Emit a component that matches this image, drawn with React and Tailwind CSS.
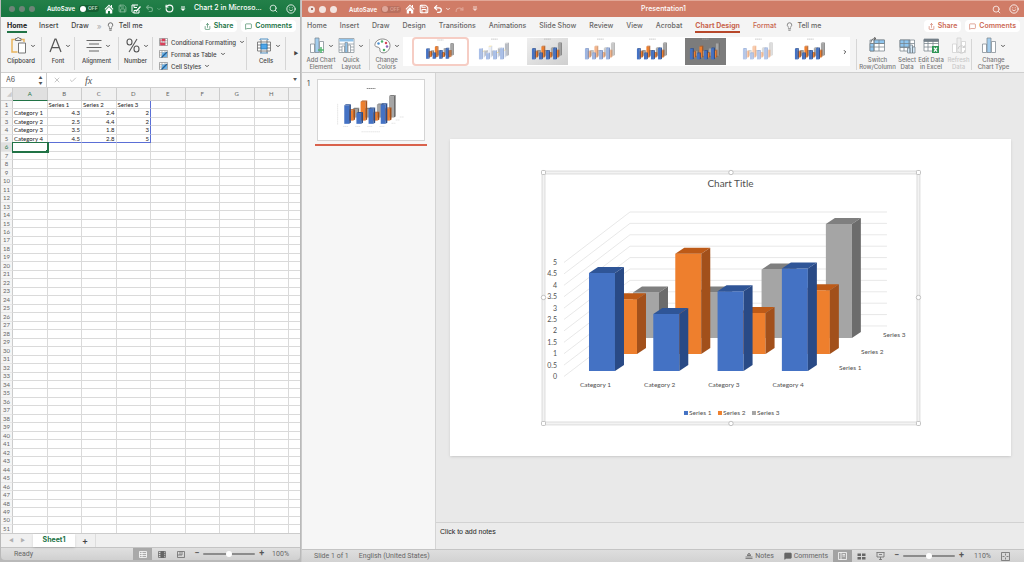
import {
  Check,
  ChevronDown,
  ChevronRight,
  Lightbulb,
  MessageSquare,
  Redo,
  RotateCcw,
  Save,
  Search,
  Share,
  Smile,
  Undo2,
  X,
} from 'lucide-react';

const CATEGORIES = ['Category 1', 'Category 2', 'Category 3', 'Category 4'];
const SERIES = [
  [4.3, 2.5, 3.5, 4.5],
  [2.4, 4.4, 1.8, 2.8],
  [2, 2, 3, 5],
];
const COLUMNS = ['A', 'B', 'C', 'D', 'E', 'F', 'G', 'H'];
const SHEET = [
  ['', 'Series 1', 'Series 2', 'Series 3'],
  ['Category 1', '4.3', '2.4', '2'],
  ['Category 2', '2.5', '4.4', '2'],
  ['Category 3', '3.5', '1.8', '3'],
  ['Category 4', '4.5', '2.8', '5'],
];
const ROWS = Array.from({ length: 51 }, (_, i) => i + 1);

const UI = "font-['Inter','Liberation_Sans',sans-serif]";

/* ---------- 3D chart ---------- */

const BASE = [
  { x: 589, y: 371 },
  { x: 611, y: 354 },
  { x: 633, y: 338 },
];
const OFFICE = [
  ['#4472c4', '#2f5597', '#294a86'],
  ['#ee7f2d', '#bd5a17', '#a2501b'],
  ['#a5a5a5', '#7f7f7f', '#6c6c6c'],
];

const Bar = ({ x, y, h, colors }) => (
  <g>
    <path d={`M${x} ${y - h}h26v${h}h-26z`} fill={colors[0]} />
    <path d={`M${x} ${y - h}l9 -6h26l-9 6z`} fill={colors[1]} />
    <path d={`M${x + 26} ${y - h}l9 -6v${h}l-9 6z`} fill={colors[2]} />
  </g>
);

const Bars = ({ palette = OFFICE }) =>
  [2, 1, 0].map((s) => (
    <g key={s}>
      {SERIES[s].map((v, c) => (
        <Bar key={c} x={BASE[s].x + c * 64.3} y={BASE[s].y} h={v * 22.8} colors={palette[s]} />
      ))}
    </g>
  ));

const GridLines = () => (
  <g fill="none" stroke="#e2e2e2" strokeWidth="0.8">
    {Array.from({ length: 11 }, (_, i) => (
      <path key={i} d={`M564 ${376.5 - i * 11.4}L630 ${326 - i * 11.4}H887`} />
    ))}
  </g>
);

const SlideChart = () => (
  <svg
    viewBox="450 139 561 317"
    className="block w-full bg-white shadow-sm font-['Lato','Liberation_Sans',sans-serif]"
    role="img"
    aria-label="Chart Title"
  >
    <rect x="543.5" y="172.5" width="375" height="251" fill="none" stroke="#f3f3f3" strokeWidth="3" />
    <rect x="542" y="171" width="378" height="254" fill="none" stroke="#cacaca" strokeWidth="0.6" />
    <rect x="545" y="174" width="372" height="248" fill="none" stroke="#cacaca" strokeWidth="0.6" />
    <GridLines />
    <Bars />
    <g fill="#505050" fontSize="7">
      <text x="730.5" y="187" fontSize="10" textAnchor="middle">Chart Title</text>
      {Array.from({ length: 11 }, (_, i) => (
        <text key={i} x="557" y={379 - i * 11.4} textAnchor="end">{i / 2}</text>
      ))}
      {CATEGORIES.map((c, i) => (
        <text key={c} x={595.5 + i * 64.2} y="387.5" fontSize="6.5" textAnchor="middle">{c}</text>
      ))}
      {[0, 1, 2].map((s) => (
        <g key={s} fontSize="6.5">
          <text x={839 + s * 22} y={370.5 - s * 16.5}>{`Series ${s + 1}`}</text>
          <rect x={684 + s * 34} y="411" width="4" height="4" fill={OFFICE[s][0]} />
          <text x={689 + s * 34} y="415.5">{`Series ${s + 1}`}</text>
        </g>
      ))}
    </g>
    <g fill="#fff" stroke="#b4b4b4" strokeWidth="0.8">
      {[543.5, 918.5].map((x) =>
        [172.5, 423.5].map((y) => <rect key={`${x}-${y}`} x={x - 2} y={y - 2} width="4" height="4" rx="1" />)
      )}
      <circle cx="731" cy="172.5" r="2.2" />
      <circle cx="731" cy="423.5" r="2.2" />
      <circle cx="543.5" cy="297.5" r="2.2" />
      <circle cx="918.5" cy="297.5" r="2.2" />
    </g>
  </svg>
);

const SlideThumb = () => (
  <svg viewBox="450 139 561 317" className="block w-full border border-[#d4d4d4] bg-white" aria-hidden="true">
    <Bars />
    <g stroke="#8a8a8a" strokeWidth="4" strokeDasharray="8 2">
      <path d="M708 184h46" stroke="#666" />
      <g strokeWidth="2" stroke="#bbb">
        <path d="M583 385h26M647 385h26M711 385h26M775 385h26M680 413h100M839 368h22M861 351h22M883 335h22" />
        <path d="M554 265v112" />
      </g>
    </g>
  </svg>
);

/* ---------- small shared bits ---------- */

const Divider = () => <div className="my-[2px] w-px shrink-0 self-stretch bg-[#d6d6d6]" />;

const Caret = () => <ChevronDown size={6} strokeWidth={4} className="shrink-0 text-[#555]" />;

const HomeIcon = () => (
  <svg width="10" height="10" viewBox="0 0 20 20" fill="currentColor">
    <path d="M10 1L1 10l1.500 1.500L10 4l7.500 7.500L19 10l-3-3V2h-2v3z" />
    <path d="M10 6l-6.500 6.500V19h4.500v-5h4v5h4.500v-6.500z" />
  </svg>
);

const SaveEditIcon = () => (
  <svg width="10" height="10" viewBox="0 0 20 20" fill="none" stroke="currentColor" strokeWidth="2">
    <path d="M14 2H2v13l3 3h11v-6M6 2v5h6M6 18v-5h4" />
    <path d="M9 12l2 2 8-9" strokeWidth="2.500" />
  </svg>
);

const MoreIcon = () => (
  <svg width="6" height="6" viewBox="0 0 12 12" fill="currentColor">
    <path d="M2 1h8v2H2zM1 5h10l-5 5z" />
  </svg>
);

const IconButton = ({ label, className = '', children }) => (
  <button type="button" aria-label={label} className={`flex shrink-0 items-center ${className}`}>
    {children}
  </button>
);

const AutoSave = ({ dim }) => (
  <label className="flex shrink-0 items-center gap-1 text-[6px] font-semibold">
    AutoSave
    <span className={`flex h-[7px] w-5 items-center gap-[2px] rounded-full px-px ${dim ? 'bg-[#b9705f]' : 'bg-[#155f33]'}`}>
      <input
        type="checkbox"
        className={`size-[6px] shrink-0 appearance-none rounded-full ${dim ? 'bg-[#dfa699]' : 'bg-white'}`}
      />
      <span className={`text-[5px] leading-[7px] ${dim ? 'text-[#dba092]' : 'text-[#c5dccd]'}`}>OFF</span>
    </span>
  </label>
);

const ShareButtons = ({ color }) => (
  <div className={`flex shrink-0 items-center gap-1 text-[7px] font-semibold ${color}`}>
    <button type="button" className="flex h-3 items-center gap-[3px] rounded-sm bg-white px-1">
      <Share size={7} /> Share
    </button>
    <button type="button" className="flex h-3 items-center gap-[3px] rounded-sm bg-white px-1">
      <MessageSquare size={7} /> Comments
    </button>
  </div>
);

const ZoomControl = ({ label }) => (
  <div className="flex items-center gap-1 text-[9px] font-semibold text-[#555]">
    <button type="button" aria-label="Zoom out">−</button>
    <input
      type="range"
      aria-label={label}
      defaultValue="50"
      className="h-[2px] w-[52px] appearance-none rounded-full bg-[#8c8c8c] [&::-webkit-slider-thumb]:size-[6px] [&::-webkit-slider-thumb]:appearance-none [&::-webkit-slider-thumb]:rounded-full [&::-webkit-slider-thumb]:bg-white"
    />
    <button type="button" aria-label="Zoom in">+</button>
  </div>
);

/* ---------- ribbon icons ---------- */

const ClipboardIcon = () => (
  <svg width="16" height="17" viewBox="0 0 32 34" fill="none" strokeWidth="2">
    <path d="M9 5H2v25h11M20 5h6v5" stroke="#e8b45c" strokeWidth="3" />
    <path d="M9 7V3h3c0-3 5-3 5 0h3v4z" fill="#eee" stroke="#777" />
    <path d="M15 12h14v20H15z" fill="#fff" stroke="#777" />
  </svg>
);

const FontIcon = () => (
  <svg width="13" height="15" viewBox="0 0 26 30" fill="none" stroke="#555" strokeWidth="2.500">
    <path d="M2 28L12 2h2l10 26M6 19h14" />
  </svg>
);

const AlignIcon = () => (
  <svg width="16" height="13" viewBox="0 0 32 26" fill="none" stroke="#666" strokeWidth="2">
    <path d="M1 3h30M6 10h20M1 17h30M6 24h20" />
  </svg>
);

const PercentIcon = () => (
  <svg width="14" height="15" viewBox="0 0 28 30" fill="none" stroke="#555" strokeWidth="2.200">
    <ellipse cx="7" cy="8" rx="5" ry="6" />
    <ellipse cx="21" cy="22" rx="5" ry="6" />
    <path d="M22 2L6 28" />
  </svg>
);

const StyleIcon = ({ kind }) => (
  <svg width="9" height="8" viewBox="0 0 18 16" fill="none" strokeWidth="1.200">
    <path d="M1 1h16v14H1z" fill="#fff" stroke="#777" />
    <path d="M1 5.500h16M1 10h16M6 1v14M12 1v14" stroke="#888" />
    {kind === 'cond' ? (
      <path d="M6 2h6v4H6zM3 10h9v4H3zM3 2v11" fill="#d9415a" stroke="#d9415a" />
    ) : (
      <>
        <path d="M6 5h10v9H6z" fill="#6fb2e6" />
        <path d="M16 4l-8 8-3 3" stroke="#235f94" strokeWidth="2.500" />
      </>
    )}
  </svg>
);

const CellsIcon = () => (
  <svg width="16" height="16" viewBox="0 0 32 32" fill="none" stroke="#666" strokeWidth="1.600">
    <path d="M3 8h26v18H3z" fill="#fff" />
    <path d="M3 14h26M3 20h26M10 4v26M22 4v26" />
    <path d="M10 12h12v10H10z" fill="#4ea6ea" stroke="#2878b8" />
    <path d="M8 2h16M8 2v2M24 2v2M8 30h16" stroke="#2878b8" />
  </svg>
);

const ColumnsIcon = ({ plus, faded }) => (
  <svg width="16" height="17" viewBox="0 0 32 34" stroke={faded ? '#cfcfcf' : '#7d8891'} strokeWidth="1.500" fill="#fff">
    <path d="M3 14h8v17H3z" />
    <path d="M12 2h8v29h-8z" fill={faded ? '#eee' : '#a3cdee'} />
    <path d="M21 9h8v22h-8z" />
    {plus && <path d="M24 20v12M18 26h12" stroke="#54b872" strokeWidth="3" />}
    {faded && <path d="M14 24a7 7 0 0 1 13-3v-4m0 4h-4M28 26a7 7 0 0 1-13 3" fill="none" strokeWidth="2" />}
  </svg>
);

const LayoutIcon = () => (
  <svg width="17" height="17" viewBox="0 0 34 34" fill="#fff" stroke="#8a949c" strokeWidth="1.500">
    <path d="M2 3h30v28H2z" />
    <path d="M3 4h28v5H3z" fill="#8fc2ea" stroke="none" />
    <path d="M2 14h30M2 20h30M2 26h30" />
    <path d="M8 18h5v13H8z" />
    <path d="M14 11h5v20h-5z" fill="#8fc2ea" />
    <path d="M20 16h5v15h-5z" />
  </svg>
);

const PaletteIcon = () => (
  <svg width="17" height="16" viewBox="0 0 34 32" fill="#fff" stroke="#666" strokeWidth="1.500">
    <path d="M17 2C7 2 1 9 2 15c1 4 6 2 9 5 2 3-1 7 4 9 8 3 17-4 17-14C32 7 25 2 17 2z" />
    <g stroke="none">
      <circle cx="9" cy="11" r="2.500" fill="#4a8fd0" />
      <circle cx="16" cy="7" r="2.500" fill="#4cae6a" />
      <circle cx="24" cy="10" r="2.500" fill="#d8485a" />
      <circle cx="26" cy="17" r="2.500" fill="#8a63b5" />
      <circle cx="20" cy="24" r="2.500" fill="#4cae6a" />
    </g>
  </svg>
);

const TableIcon = ({ kind }) => (
  <svg width="17" height="17" viewBox="0 0 34 34" fill="#fff" stroke="#75818a" strokeWidth="1.500">
    <path d="M2 6h29v22H2z" />
    {kind === 'switch' && <path d="M10 6h21v7H10zM2 13h8v15H2z" fill="#8fc6f0" />}
    {kind === 'select' && <path d="M2 6h20v15H2z" fill="#8fc6f0" />}
    {kind === 'excel' && <path d="M2 4h29v5H2z" fill="#75818a" />}
    <path d="M2 13h29M2 20h29M10 6v22M20 6v22" fill="none" />
    {kind === 'switch' && <path d="M4 11C4 5 8 3 13 3M10 0l4 3-4 3" fill="none" stroke="#444" />}
    {kind === 'select' && <path d="M17 22h5v10h-5zM22 16h5v16h-5zM27 20h5v12h-5z" fill="#d3e8f8" />}
    {kind === 'excel' && (
      <>
        <path d="M18 18h14v14H18z" fill="#2e9455" stroke="none" />
        <path d="M22 21l6 8M28 21l-6 8" stroke="#fff" strokeWidth="2.500" />
      </>
    )}
  </svg>
);

/* ---------- Excel window ---------- */

const RibbonGroup = ({ label, icon, className }) => (
  <button type="button" className={`flex flex-col items-center gap-[3px] pt-[2px] ${className}`}>
    <span className="flex h-[17px] items-center gap-[3px] pl-1">
      {icon}
      <Caret />
    </span>
    <span className="leading-[7px] whitespace-nowrap">{label}</span>
  </button>
);

const ExcelTitleBar = () => (
  <header className="flex h-[17px] shrink-0 items-center bg-linear-to-b from-[#238049] to-[#17753f] pr-1 pl-2 text-white">
    <div className="flex gap-1">
      <span className="size-[6px] rounded-full bg-[#6d8577]" />
      <span className="size-[6px] rounded-full bg-[#6d8577]" />
      <span className="size-[6px] rounded-full bg-[#6d8577]" />
    </div>
    <div className="ml-3"><AutoSave /></div>
    <IconButton label="Home" className="ml-[5px]"><HomeIcon /></IconButton>
    <IconButton label="Save" className="ml-1 text-[#7fb594]"><Save size={9} strokeWidth={2.5} /></IconButton>
    <IconButton label="Save as" className="ml-1"><SaveEditIcon /></IconButton>
    <IconButton label="Undo" className="ml-1 gap-[2px] text-[#6dab86]"><Undo2 size={9} strokeWidth={3} /><ChevronDown size={6} strokeWidth={3} /></IconButton>
    <IconButton label="Redo" className="ml-[3px]"><RotateCcw size={9} strokeWidth={3} /></IconButton>
    <IconButton label="More" className="ml-[6px]"><MoreIcon /></IconButton>
    <h1 className="ml-2 min-w-0 flex-1 text-[7px] font-medium whitespace-nowrap">Chart 2 in Microso...</h1>
    <IconButton label="Search"><Search size={9} /></IconButton>
    <IconButton label="Feedback" className="ml-2"><Smile size={10} /></IconButton>
  </header>
);

const ExcelRibbon = () => (
  <div className="shrink-0 border-b border-[#d0d0d0] bg-[#f4f4f4]">
    <nav className="flex h-[18px] items-center pr-1 pl-[6px] text-[7px] font-medium text-[#444]">
      <a href="#home" className="border-b-2 border-[#217346] pt-px leading-[10px] font-bold text-[#222]">Home</a>
      <a href="#insert" className="ml-3">Insert</a>
      <a href="#draw" className="ml-[13px]">Draw</a>
      <span className="ml-2 text-[8px] text-[#b5b5b5]">»</span>
      <button type="button" className="ml-1 flex items-center gap-1"><Lightbulb size={9} /> Tell me</button>
      <div className="ml-auto"><ShareButtons color="text-[#217346]" /></div>
    </nav>
    <div className="flex h-[37px] text-[6px] font-medium text-[#444]">
      <RibbonGroup label="Clipboard" icon={<ClipboardIcon />} className="w-10" />
      <Divider />
      <RibbonGroup label="Font" icon={<FontIcon />} className="w-[32px]" />
      <Divider />
      <RibbonGroup label="Alignment" icon={<AlignIcon />} className="w-[43px]" />
      <Divider />
      <RibbonGroup label="Number" icon={<PercentIcon />} className="w-[33px]" />
      <Divider />
      <div className="flex flex-1 flex-col justify-around pt-px pl-[6px]">
        <button type="button" className="flex items-center gap-[3px] whitespace-nowrap"><StyleIcon kind="cond" />Conditional Formatting <Caret /></button>
        <button type="button" className="flex items-center gap-[3px] whitespace-nowrap"><StyleIcon />Format as Table <Caret /></button>
        <button type="button" className="flex items-center gap-[3px] whitespace-nowrap"><StyleIcon />Cell Styles <Caret /></button>
      </div>
      <Divider />
      <RibbonGroup label="Cells" icon={<CellsIcon />} className="w-[38px]" />
      <Divider />
      <button type="button" aria-label="Scroll ribbon" className="ml-[6px] w-2 text-[5px]">▶</button>
    </div>
  </div>
);

const FormulaBar = () => (
  <div className="flex h-[15px] shrink-0 items-center border-b border-[#d0d0d0] bg-white text-[#555]">
    <input aria-label="Name box" defaultValue="A6" className="w-[34px] pl-[5px] text-[7px]" />
    <div className="flex h-full w-3 flex-col items-center justify-center gap-px border-r border-[#ccc] text-[4px] leading-[5px]">
      <span>▲</span>
      <span>▼</span>
    </div>
    <IconButton label="Cancel" className="ml-[6px] text-[#bcbcbc]"><X size={8} strokeWidth={2.5} /></IconButton>
    <IconButton label="Enter" className="ml-2 text-[#bcbcbc]"><Check size={8} strokeWidth={2.5} /></IconButton>
    <label htmlFor="formula" className="ml-2 font-['Liberation_Serif',serif] text-[10px] italic">fx</label>
    <input id="formula" className="min-w-0 flex-1 px-1 text-[7px]" />
    <span className="pr-[3px] text-[4px]">▼</span>
  </div>
);

// borders of the charted range and of the selected cell
const cellClass = (row, col) => {
  if (row === 6 && col === 0) return 'relative outline outline-[#217346] border-[#217346]';
  let cls = row === 5 && col > 0 && col < 4 ? 'border-b-[#5b6fd6]' : 'border-b-[#dadada]';
  cls += col === 3 && row < 6 ? ' border-r-[#5b6fd6]' : ' border-r-[#dadada]';
  if (row > 1 && col > 0) cls += ' text-right';
  return cls;
};

const Sheet = () => (
  <div className="min-h-0 flex-1 overflow-hidden bg-white">
    <table className="h-[446px] w-full table-fixed border-separate border-spacing-0 font-['Lato','Liberation_Sans',sans-serif] text-[6px] leading-[6px] text-[#222]">
      <colgroup>
        <col className="w-[12px]" />
        {COLUMNS.map((c) => <col key={c} />)}
        <col className="w-[11px]" />
      </colgroup>
      <thead>
        <tr className="h-[13px] bg-[#f1f1f1] text-[#666]">
          <th className="border-r border-b border-[#ccc] p-0 text-right text-[#ccc]">◢</th>
          {COLUMNS.map((c) => (
            <th
              key={c}
              scope="col"
              className={`border-r border-b p-0 font-normal ${c === 'A' ? 'border-r-[#ccc] border-b-[#217346] bg-[#e0e0e0] text-[#217346]' : 'border-[#ccc]'}`}
            >
              {c}
            </th>
          ))}
          <th className="border-b border-[#ccc] p-0" />
        </tr>
      </thead>
      <tbody>
        {ROWS.map((r) => (
          <tr key={r}>
            <th
              scope="row"
              className={`border-r border-b border-r-[#ccc] border-b-[#e6e6e6] p-0 font-normal ${r === 6 ? 'bg-[#e0e0e0] text-[#217346]' : 'bg-[#f5f5f5] text-[#666]'}`}
            >
              {r}
            </th>
            {COLUMNS.map((c, i) => (
              <td key={c} className={`border-r border-b p-0 px-px whitespace-nowrap ${cellClass(r, i)}`}>
                {SHEET[r - 1]?.[i]}
                {r === 6 && i === 0 && <span className="absolute -right-[2px] -bottom-[2px] size-[3px] bg-[#217346]" />}
              </td>
            ))}
            <td className="border-b border-[#dadada] p-0" />
          </tr>
        ))}
      </tbody>
    </table>
  </div>
);

const GridIcon = ({ heavy }) => (
  <svg width="8" height="7" viewBox="0 0 16 14" fill="none" stroke="currentColor" strokeWidth="1.500">
    <path d="M1 1h14v12H1zM1 5h14M1 9h14M6 1v12" />
    {heavy && <path d="M6 1h6v12H6z" fill="currentColor" />}
  </svg>
);

const ExcelFooter = () => (
  <footer className="shrink-0 text-[7px] text-[#666]">
    <div className="flex h-[14px] items-stretch border-t border-[#ccc] bg-[#f0f0f0]">
      <div className="flex w-[32px] items-center gap-[7px] pl-2 text-[5px] text-[#b0b0b0]">
        <span>◀</span>
        <span>▶</span>
      </div>
      <a href="#sheet1" className="flex w-[42px] items-center justify-center bg-white font-bold text-[#217346] shadow-sm">Sheet1</a>
      <button type="button" aria-label="Add sheet" className="w-[21px] border-r border-[#ddd] text-[9px] leading-3 font-semibold text-[#444]">+</button>
    </div>
    <div className="flex h-[13px] items-center rounded-b border-t border-[#c4c4c4] bg-linear-to-b from-[#e0e0e0] to-[#d0d0d0] pr-[11px] pl-[13px] font-['Roboto','Liberation_Sans',sans-serif]">
      <span className="flex-1">Ready</span>
      <IconButton label="Normal view" className="h-full w-[19px] justify-center bg-[#a9a9a9] text-white"><GridIcon /></IconButton>
      <IconButton label="Page layout" className="w-[19px] justify-center"><GridIcon heavy /></IconButton>
      <IconButton label="Page break" className="mr-1 w-[19px] justify-center">
        <svg width="8" height="7" viewBox="0 0 16 14" fill="none" stroke="currentColor" strokeWidth="1.500">
          <path d="M1 1h14v12H1zM6 1v7M10 1v7M1 8h9" />
        </svg>
      </IconButton>
      <ZoomControl label="Sheet zoom" />
      <span className="ml-2">100%</span>
    </div>
  </footer>
);

const ExcelWindow = () => (
  <section className="flex w-[29.4%] shrink-0 flex-col overflow-hidden border-x border-[#b9b9b9] pb-[2px]">
    <ExcelTitleBar />
    <ExcelRibbon />
    <FormulaBar />
    <Sheet />
    <ExcelFooter />
  </section>
);

/* ---------- PowerPoint window ---------- */

const PptButton = ({ lines, icon, caret, className = '' }) => (
  <button type="button" className={`flex shrink-0 flex-col items-center gap-[2px] ${className}`}>
    <span className="flex h-[17px] items-center gap-[3px]">
      {icon}
      {caret && <Caret />}
    </span>
    <span className="text-center leading-[7px] whitespace-nowrap">
      {lines[0]}
      <br />
      {lines[1]}
    </span>
  </button>
);

const PptTitleBar = () => (
  <header className="flex h-[17px] shrink-0 items-center border-t border-[#e2a797] bg-[#d07c67] pr-[5px] pl-[6px] text-white">
    <div className="flex flex-1 items-center">
      <div className="flex gap-1">
        <span className="flex size-[7px] items-center justify-center rounded-full bg-[#f3e4e0]"><span className="size-[2px] rounded-full bg-[#8d4a3b]" /></span>
        <span className="size-[7px] rounded-full bg-[#f3e4e0]" />
        <span className="size-[7px] rounded-full bg-[#f3e4e0]" />
      </div>
      <div className="ml-3"><AutoSave dim /></div>
      <IconButton label="Home" className="ml-1"><HomeIcon /></IconButton>
      <IconButton label="Save" className="ml-1"><Save size={10} strokeWidth={2.5} /></IconButton>
      <IconButton label="Undo" className="ml-1 gap-[2px]"><Undo2 size={10} strokeWidth={3} /><ChevronDown size={6} strokeWidth={3} /></IconButton>
      <IconButton label="Redo" className="ml-1 text-[#e0a597]"><Redo size={9} strokeWidth={3} /></IconButton>
      <IconButton label="More" className="ml-2 text-[#f0d4cd]"><MoreIcon /></IconButton>
    </div>
    <h1 className="text-[7px] font-medium">Presentation1</h1>
    <div className="flex flex-1 justify-end gap-2">
      <IconButton label="Search"><Search size={9} /></IconButton>
      <IconButton label="Feedback"><Smile size={10} /></IconButton>
    </div>
  </header>
);

const TABS = ['Home', 'Insert', 'Draw', 'Design', 'Transitions', 'Animations', 'Slide Show', 'Review', 'View', 'Acrobat', 'Chart Design', 'Format'];

const tabClass = (tab) => {
  if (tab === 'Chart Design') return 'border-b-2 border-[#b7472a] pt-px leading-[10px] font-bold text-[#c9654f]';
  if (tab === 'Format') return 'text-[#c9654f]';
  return '';
};

const SOFT = [
  ['#9db5e2', '#7f97c8', '#7189b8'],
  ['#f4b48a', '#dc9a6c', '#c98a60'],
  ['#c9c9c9', '#b0b0b0', '#a0a0a0'],
];
const PALE = [
  ['#b4c7ea', '#8fa8d6', '#a3b7de'],
  ['#f8cbad', '#eeb48e', '#f0a97a'],
  ['#dbdbdb', '#c4c4c4', '#cfcfcf'],
];
const CONE = [
  ['#a9bfe8', '#d3def3', '#8fa6d0'],
  ['#eceff5', '#f3d98c', '#c9d2e2'],
  ['#b9bdc4', '#dedede', '#999da5'],
];
const STYLES = [
  { bg: 'bg-white', palette: OFFICE, selected: true },
  { bg: 'bg-white', palette: CONE },
  { bg: 'bg-linear-to-br from-[#efefef] to-[#cfcfcf]', palette: OFFICE },
  { bg: 'bg-white', palette: SOFT },
  { bg: 'bg-white', palette: OFFICE },
  { bg: 'bg-[#7c7c7c]', palette: OFFICE },
  { bg: 'bg-white', palette: PALE },
  { bg: 'bg-white', palette: OFFICE },
];

const StyleGallery = () => (
  <div className="flex h-[29px] min-w-0 flex-1 items-center bg-white pl-[9px]">
    {STYLES.map((s, i) => (
      <button
        key={i}
        type="button"
        aria-label={`Chart style ${i + 1}`}
        className={`flex h-full flex-1 items-center justify-center ${s.selected ? 'rounded-sm border-2 border-[#f6cdc4]' : ''}`}
      >
        <svg viewBox="544 176 374 246" className={`w-[41px] ${s.selected ? 'h-[25px]' : 'h-[27px]'} ${s.bg}`}>
          <path d="M700 186h60" stroke="#aaa" strokeWidth="6" strokeDasharray="14 4" />
          <Bars palette={s.palette} />
        </svg>
      </button>
    ))}
    <ChevronRight size={6} strokeWidth={4} className="mr-[2px] ml-[5px] shrink-0 text-[#444]" />
  </div>
);

const PptRibbon = () => (
  <div className="shrink-0 border-b border-[#cfcfcf] bg-[#f4f4f4]">
    <nav className="flex h-[18px] items-center gap-[13px] pr-1 pl-[5px] text-[7px] font-medium whitespace-nowrap text-[#666]">
      {TABS.map((tab) => (
        <a key={tab} href="#ribbon" className={tabClass(tab)}>{tab}</a>
      ))}
      <button type="button" className="-ml-1 flex items-center gap-[3px]"><Lightbulb size={9} /> Tell me</button>
      <div className="ml-auto"><ShareButtons color="text-[#cc6a55]" /></div>
    </nav>
    <div className="flex h-[37px] items-start pt-[2px] text-[6px] font-medium text-[#777]">
      <PptButton lines={['Add Chart', 'Element']} icon={<ColumnsIcon plus />} caret className="w-[38px]" />
      <PptButton lines={['Quick', 'Layout']} icon={<LayoutIcon />} caret className="w-[22px]" />
      <div className="w-[7px]" />
      <Divider />
      <PptButton lines={['Change', 'Colors']} icon={<PaletteIcon />} caret className="w-[33px]" />
      <StyleGallery />
      <div className="w-[6px]" />
      <Divider />
      <PptButton lines={['Switch', 'Row/Column']} icon={<TableIcon kind="switch" />} className="w-[41px]" />
      <PptButton lines={['Select', 'Data']} icon={<TableIcon kind="select" />} className="w-[18px]" />
      <PptButton lines={['Edit Data', 'in Excel']} icon={<TableIcon kind="excel" />} className="w-[30px]" />
      <PptButton lines={['Refresh', 'Data']} icon={<ColumnsIcon faded />} className="w-[25px] text-[#c8c8c8]" />
      <Divider />
      <PptButton lines={['Change', 'Chart Type']} icon={<ColumnsIcon />} caret className="mr-[9px] w-[43px]" />
    </div>
  </div>
);

const PptFooter = () => (
  <footer className="flex h-[13px] shrink-0 items-center border-t border-[#c4c4c4] bg-linear-to-b from-[#dedede] to-[#d2d2d2] pr-[14px] pl-3 font-['Roboto','Liberation_Sans',sans-serif] text-[7px] text-[#666]">
    <span>Slide 1 of 1</span>
    <span className="ml-[10px] flex-1">English (United States)</span>
    <button type="button" className="flex items-center gap-[2px]">
      <svg width="8" height="8" viewBox="0 0 16 16" fill="none" stroke="currentColor" strokeWidth="1.500">
        <path d="M1 10h14M1 13h14M4 7h8M8 2l3 4H5z" />
      </svg>
      Notes
    </button>
    <button type="button" className="ml-[10px] flex items-center gap-[2px]"><MessageSquare size={8} fill="currentColor" /> Comments</button>
    <IconButton label="Normal" className="ml-[5px] h-full w-[19px] justify-center bg-[#a3a3a3] text-white">
      <svg width="9" height="8" viewBox="0 0 18 16" fill="none" stroke="currentColor" strokeWidth="1.500">
        <path d="M1 1h16v14H1zM6 1v14M9 5h5M9 8h5" />
      </svg>
    </IconButton>
    <IconButton label="Slide sorter" className="w-[19px] justify-center">
      <svg width="9" height="7" viewBox="0 0 18 14" fill="currentColor">
        <path d="M1 1h7v5H1zM10 1h7v5h-7zM1 8h7v5H1zM10 8h7v5h-7z" />
      </svg>
    </IconButton>
    <IconButton label="Slide show" className="mr-1 w-[19px] justify-center">
      <svg width="9" height="8" viewBox="0 0 18 16" fill="none" stroke="currentColor" strokeWidth="1.500">
        <path d="M1 1h16M2 1v9h14V1M6 5h6M9 10v5M6 15h6" />
      </svg>
    </IconButton>
    <ZoomControl label="Slide zoom" />
    <span className="ml-[10px]">110%</span>
    <IconButton label="Fit slide" className="ml-[10px]">
      <svg width="9" height="9" viewBox="0 0 18 18" fill="none" stroke="currentColor" strokeWidth="1.500">
        <path d="M1 1h16v16H1zM9 3v4M9 11v4M3 9h4M11 9h4" />
      </svg>
    </IconButton>
  </footer>
);

const PowerPointWindow = () => (
  <section className="flex min-w-0 flex-1 flex-col border-l border-[#c9c9c9]">
    <PptTitleBar />
    <PptRibbon />
    <div className="flex min-h-0 flex-1">
      <aside className="flex w-[134px] shrink-0 items-start border-r border-[#d4d4d4] bg-[#f6f6f6] pt-[6px] pl-[5px] text-[7px] text-[#444]">
        <span className="w-2">1</span>
        <div className="w-[112px] border-b-2 border-[#d9624c] px-[2px] pb-[3px]">
          <SlideThumb />
        </div>
      </aside>
      <main className="flex min-w-0 flex-1 flex-col bg-[#e9e9e9]">
        <div className="flex min-h-0 flex-1 items-center pr-[13px] pl-[14px]">
          <SlideChart />
        </div>
        <textarea
          aria-label="Notes"
          defaultValue="Click to add notes"
          className="block h-[27px] w-full resize-none border-t border-[#d2d2d2] bg-[#ebebeb] px-1 pt-1 font-['Liberation_Sans',sans-serif] text-[7px] leading-[9px] text-[#222]"
        />
      </main>
    </div>
    <PptFooter />
  </section>
);

const App = () => (
  <div className={`flex h-screen overflow-hidden bg-[#b9b9b9] ${UI}`}>
    <ExcelWindow />
    <PowerPointWindow />
  </div>
);

export default App;
